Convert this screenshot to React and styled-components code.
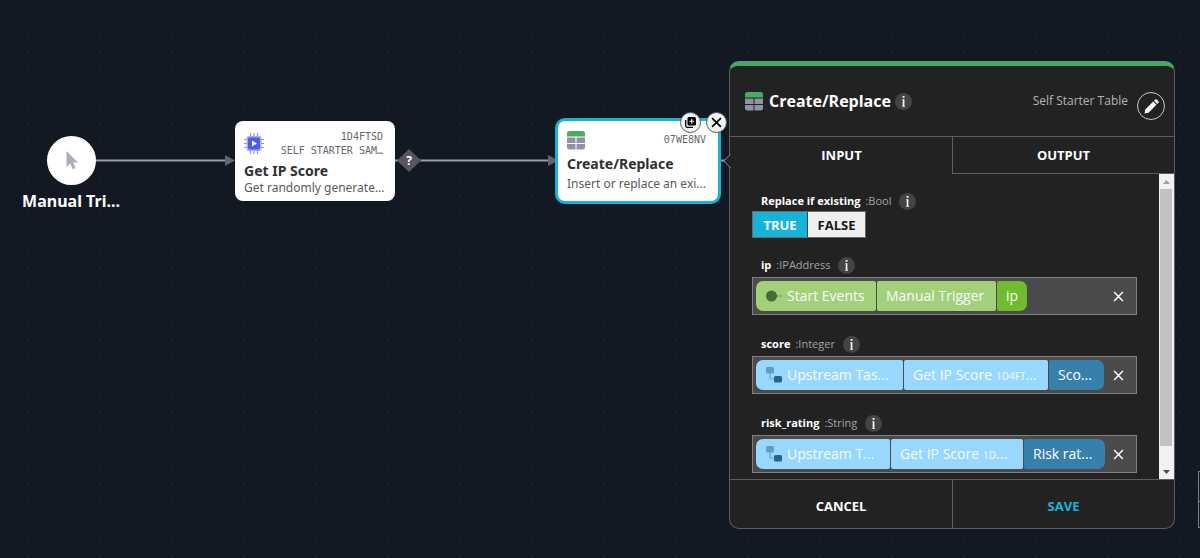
import React, { useState } from 'react';
import styled, { createGlobalStyle, css } from 'styled-components';

const GlobalStyle = createGlobalStyle`
    *, *::before, *::after {
        box-sizing: border-box;
    }

    body {
        margin: 0;
        background: #121923;
        font-family: 'Open Sans', 'Noto Sans', sans-serif;
        overflow: hidden;
    }

    button {
        border: 0;
        padding: 0;
        background: none;
        font-family: inherit;
        cursor: pointer;
    }
`;

const colors = {
    panel: '#222222',
    line: '#5c5e60',
    accent: '#16b4d8',
    green: '#48a868',
    edge: '#9a9ba8',
};

const ellipsis = css`
    overflow: hidden;
    white-space: nowrap;
    text-overflow: ellipsis;
`;

// canvas
const Canvas = styled.main`
    position: relative;
    width: 100%;
    height: 100vh;
    overflow: hidden;
    background-color: #121923;
    background-image: radial-gradient(circle, #1a232e 1px, transparent 1px);
    background-size: 18px 18px;
    background-position: 1px 7px;
`;

const Edges = styled.svg`
    position: absolute;
    top: 0;
    left: 0;
    width: 730px;
    height: 300px;
`;

const Trigger = styled.div`
    position: absolute;
    top: 136px;
    left: 21px;
    width: 100px;
    display: flex;
    flex-direction: column;
    align-items: center;
    gap: 5px;
`;

const TriggerCircle = styled.div`
    width: 49px;
    height: 49px;
    border-radius: 50%;
    background: white;
    display: flex;
    align-items: center;
    justify-content: center;
`;

const TriggerName = styled.div`
    color: white;
    font-size: 16px;
    line-height: 22px;
    font-weight: 700;
    font-family: 'Noto Sans', sans-serif;
    white-space: nowrap;
`;

const NodeCard = styled.article`
    position: absolute;
    top: ${p => p.$top}px;
    left: ${p => p.$left}px;
    width: ${p => (p.$selected ? 166 : 160)}px;
    height: ${p => (p.$selected ? 86 : 80)}px;
    padding: 8px 9px;
    border: ${p => (p.$selected ? `3px solid ${colors.accent}` : '0')};
    border-radius: ${p => (p.$selected ? 10 : 8)}px;
    background: white;
    font-family: 'Noto Sans', sans-serif;
`;

const NodeHead = styled.div`
    display: flex;
    justify-content: space-between;
    height: ${p => (p.$short ? 25 : 32)}px;
    padding-right: 3px;

    svg {
        margin-top: ${p => (p.$short ? 2 : 4)}px;
    }
`;

const NodeMeta = styled.div`
    padding-top: ${p => (p.$low ? 4 : 1)}px;
    color: #66666c;
    font-family: 'DejaVu Sans Mono', monospace;
    font-size: 10px;
    line-height: 14px;
    text-align: right;
    text-transform: uppercase;
`;

const NodeName = styled.h2`
    margin: 0;
    color: #303034;
    font-size: 14px;
    line-height: 20px;
    font-weight: 700;
`;

const NodeText = styled.p`
    margin: 0;
    color: #5a5a5e;
    font-size: 12px;
    line-height: ${p => (p.$loose ? 20 : 14)}px;
    white-space: nowrap;
`;

const NodeActions = styled.div`
    position: absolute;
    top: -9px;
    right: -9px;
    display: flex;
    gap: 5px;
`;

const RoundButton = styled.button`
    width: 21px;
    height: 21px;
    border: 1px solid #55585c;
    border-radius: 50%;
    background: #f2f2f2;
    display: flex;
    align-items: center;
    justify-content: center;
`;

const SideTool = styled.div`
    position: absolute;
    top: 471px;
    right: -28px;
    width: 30px;
    height: 57px;
    border: 1px solid #7c8086;

    &::before {
        content: '';
        display: block;
        height: 30px;
        border-bottom: 1px solid #7c8086;
    }
`;

// panel
const Panel = styled.section`
    position: absolute;
    top: 61px;
    left: 729px;
    width: 446px;
    height: 468px;
    display: flex;
    flex-direction: column;
    border: 1px solid ${colors.line};
    border-top: 5px solid ${colors.green};
    border-radius: 10px;
    background: ${colors.panel};
    color: white;
`;

const PanelHead = styled.header`
    display: flex;
    align-items: center;
    height: 71px;
    padding: 0 9px 0 15px;
    border-bottom: 1px solid ${colors.line};
`;

const PanelTitle = styled.h1`
    margin: 0 4px 0 6px;
    font-size: 16px;
    line-height: 22px;
    font-weight: 700;
`;

const Source = styled.span`
    margin-left: auto;
    margin-right: 9px;
    color: #b4b4b4;
    font-size: 12px;
    line-height: 16px;
`;

const EditButton = styled.button`
    width: 28px;
    height: 28px;
    margin-top: 10px;
    border: 1px solid #c8c8c8;
    border-radius: 50%;
    display: flex;
    align-items: center;
    justify-content: center;
`;

const Info = styled.button`
    width: 17px;
    height: 17px;
    border-radius: 50%;
    background: #444444;
    display: flex;
    align-items: center;
    justify-content: center;
`;

const Tabs = styled.div`
    display: grid;
    grid-template-columns: 1fr 1fr;
    height: 37px;
`;

const Tab = styled.button`
    color: white;
    font-size: 13px;
    font-weight: 700;
    border: 0 solid ${p => (p.$active ? 'transparent' : colors.line)};
    border-width: 0 0 1px 1px;
`;

const Body = styled.div`
    flex: 1;
    min-height: 0;
    display: flex;
`;

const Fields = styled.div`
    flex: 1;
    min-width: 0;
    padding: 17px 22px 0;
    overflow: hidden;
`;

const Field = styled.div`
    height: ${p => (p.$short ? 64 : 79)}px;
`;

const FieldLabel = styled.div`
    display: flex;
    align-items: center;
    height: 20px;
    padding-left: 9px;
    font-size: 11px;
    line-height: 18px;
    font-weight: 700;
`;

const FieldType = styled.span`
    margin: 0 8px 0 5px;
    color: #a4a4a4;
    font-weight: 400;
`;

const Toggle = styled.div`
    display: flex;
    width: 114px;
    height: 27px;
    border: 1px solid #66686a;
`;

const ToggleButton = styled.button`
    width: ${p => (p.$wide ? 58 : 54)}px;
    background: ${p => (p.$on ? colors.accent : '#efefef')};
    color: ${p => (p.$on ? 'white' : '#161616')};
    font-size: 13px;
    font-weight: 700;

    & + & {
        border-left: 1px solid #444444;
    }
`;

const ValueBox = styled.div`
    display: flex;
    align-items: center;
    height: 38px;
    margin-top: 2px;
    padding: 0 3px;
    border: 1px solid #808080;
    background: #4b4b4b;
`;

const Chips = styled.div`
    display: flex;
    gap: 1px;
    min-width: 0;
`;

const chipTone = {
    green: '#a3d07b',
    greenEnd: '#70bb2e',
    blue: '#98d8ff',
    blueEnd: '#3880ac',
};

const Chip = styled.span`
    display: flex;
    align-items: center;
    width: ${p => p.$width}px;
    height: 30px;
    padding-left: 9px;
    border-radius: 2px;
    background: ${p => chipTone[p.$tone]};
    color: ${p => (p.$tone.endsWith('End') ? 'white' : '#f6fcf8')};
    font-size: 14px;
    line-height: 20px;
    font-weight: 500;
    white-space: nowrap;

    &:first-child {
        border-radius: 7px 2px 2px 7px;
    }

    &:last-child {
        border-radius: 2px 7px 7px 2px;
    }

    svg {
        flex: none;
        margin-right: 4px;
    }

    small {
        margin-left: 4px;
        font-family: 'Noto Sans', sans-serif;
        font-size: 10px;
        opacity: 0.8;
    }
`;

const ChipText = styled.span`
    ${ellipsis}
`;

const ClearButton = styled.button`
    flex: none;
    width: 17px;
    height: 17px;
    margin-left: auto;
    margin-right: 6px;
    display: flex;
    align-items: center;
    justify-content: center;
`;

const Scrollbar = styled.div`
    width: 15px;
    display: flex;
    flex-direction: column;
    background: #f1f1f1;
`;

const ScrollArrow = styled.span`
    height: 15px;
    display: flex;
    align-items: center;
    justify-content: center;
`;

const ScrollThumb = styled.div`
    height: 257px;
    margin: 0 2px auto 1px;
    background: #c1c1c1;
`;

const PanelFoot = styled.footer`
    display: grid;
    grid-template-columns: 1fr 1fr;
    height: 49px;
    border-top: 1px solid ${colors.line};
`;

const FootButton = styled.button`
    color: ${p => (p.$primary ? colors.accent : 'white')};
    font-size: 13px;
    line-height: 18px;
    font-weight: 700;
    padding-top: 4px;

    & + & {
        border-left: 1px solid ${colors.line};
    }
`;

const Notch = styled.svg`
    position: absolute;
    top: 87px;
    left: -8px;
`;

const TableIcon = () => (
    <svg width="18" height="19" viewBox="0 0 18 19" aria-hidden="true">
        <path d="M0 5.500V2.500A2.500 2.500 0 0 1 2.500 0h13A2.500 2.500 0 0 1 18 2.500v3z" fill="#45ad63" />
        <path d="M0 6.500h8.500v5.500H0zM9.500 6.500H18V12H9.500zM0 13h8.500v5.500h-6A2.500 2.500 0 0 1 0 16zM9.500 13H18v3a2.500 2.500 0 0 1-2.500 2.500h-6z" fill="#8d94a3" />
    </svg>
);

const ChipIcon = () => (
    <svg width="20" height="21" viewBox="0 0 20 21" aria-hidden="true">
        <path d="M6.500 0v21M10 0v21M13.500 0v21M0 6.500h20M0 10.500h20M0 14.500h20" stroke="#8f97dc" strokeWidth="1.200" />
        <rect x="2.500" y="3" width="15" height="15" rx="2.500" fill="#a5acf0" />
        <rect x="4" y="4.500" width="12" height="12" rx="1.500" fill="#4f5ce8" />
        <path d="M8 7.500v6l5-3z" fill="white" />
    </svg>
);

const PointerIcon = () => (
    <svg width="14" height="19" viewBox="0 0 14 19" aria-hidden="true">
        <path d="M2.500 0v16l3.700-3.500 2.500 5.700 3-1.300-2.500-5.400H14z" fill="#a9afbb" />
    </svg>
);

const InfoIcon = () => (
    <svg width="5" height="11" viewBox="0 0 5 11" aria-hidden="true">
        <path d="M1.600 0h1.900v1.800H1.600zM1.200 3.300h2.200V10h.6v.8H1.200V10h.5V4h-.5z" fill="white" />
    </svg>
);

const CrossIcon = ({ size, color, weight }) => (
    <svg width={size} height={size} viewBox="0 0 10 10" aria-hidden="true">
        <path d="M1 1l8 8M9 1L1 9" stroke={color} strokeWidth={weight} />
    </svg>
);

const CopyIcon = () => (
    <svg width="11" height="11" viewBox="0 0 11 11" aria-hidden="true">
        <path d="M.7 3v5.800a1.500 1.500 0 0 0 1.500 1.500H8" fill="none" stroke="black" strokeWidth="1.300" />
        <rect x="2.500" y="0" width="8.500" height="8.500" rx="1.500" fill="black" />
        <path d="M6.750 2v4.500M4.500 4.250H9" stroke="white" strokeWidth="1.200" />
    </svg>
);

const PencilIcon = () => (
    <svg width="15" height="15" viewBox="0 0 15 15" aria-hidden="true">
        <path d="M.5 14.500l.8-4L9.200 2.600l3.200 3.200-7.900 7.900zM10 1.800l1-1a1.500 1.500 0 0 1 2.100 0l1.100 1.100a1.500 1.500 0 0 1 0 2.100l-1 1z" fill="white" />
    </svg>
);

const EventIcon = () => (
    <svg width="18" height="12" viewBox="0 0 18 12" aria-hidden="true">
        <path d="M10 6h7" stroke="#82ad65" strokeWidth="1.500" />
        <circle cx="6.500" cy="6" r="5.500" fill="#466c3b" />
    </svg>
);

const UpstreamIcon = () => (
    <svg width="18" height="16" viewBox="0 0 18 16" aria-hidden="true">
        <path d="M5 6v6h5" fill="none" stroke="#6ea6cc" strokeWidth="1.200" />
        <rect x="1" y="0" width="8" height="6.500" rx="1.500" fill="#629cc4" />
        <rect x="9" y="9" width="8" height="6.500" rx="1.500" fill="#2d618c" />
    </svg>
);

const InfoButton = ({ about }) => (
    <Info type="button" aria-label={`About ${about}`}>
        <InfoIcon />
    </Info>
);

const fields = [
    {
        name: 'ip',
        type: 'IPAddress',
        chips: [
            { text: 'Start Events', tone: 'green', width: 120, icon: <EventIcon /> },
            { text: 'Manual Trigger', tone: 'green', width: 119 },
            { text: 'ip', tone: 'greenEnd', width: 30 },
        ],
    },
    {
        name: 'score',
        type: 'Integer',
        chips: [
            { text: 'Upstream Tas...', tone: 'blue', width: 147, icon: <UpstreamIcon /> },
            { text: 'Get IP Score', code: '1D4FT', tone: 'blue', width: 144 },
            { text: 'Sco...', tone: 'blueEnd', width: 55 },
        ],
    },
    {
        name: 'risk_rating',
        type: 'String',
        chips: [
            { text: 'Upstream T...', tone: 'blue', width: 134, icon: <UpstreamIcon /> },
            { text: 'Get IP Score', code: '1D', tone: 'blue', width: 132 },
            { text: 'Risk rat...', tone: 'blueEnd', width: 81 },
        ],
    },
];

const App = () => {
    const [replace, setReplace] = useState(true);

    return (
        <>
            <GlobalStyle />
            <Canvas>
                <Edges aria-hidden="true">
                    <path d="M96 160.500H228M395 160.500H549M720 160.500h8" stroke={colors.edge} strokeWidth="2" />
                    <path d="M225 155l10 5.500-10 5.500zM548 155l10 5.500-10 5.500z" fill="#62656f" />
                    <path d="M409 149l12 11.500-12 11.500-12-11.500z" fill="#55565e" />
                    <text x="409" y="165" textAnchor="middle" fill="white" fontSize="12" fontWeight="700">?</text>
                </Edges>

                <Trigger>
                    <TriggerCircle><PointerIcon /></TriggerCircle>
                    <TriggerName>Manual Tri...</TriggerName>
                </Trigger>

                <NodeCard $top={121} $left={235}>
                    <NodeHead>
                        <ChipIcon />
                        <NodeMeta>1D4FTSD<br />Self Starter Sam…</NodeMeta>
                    </NodeHead>
                    <NodeName>Get IP Score</NodeName>
                    <NodeText>Get randomly generate...</NodeText>
                </NodeCard>

                <NodeCard $top={118} $left={555} $selected>
                    <NodeHead $short>
                        <TableIcon />
                        <NodeMeta $low>07WE8NV</NodeMeta>
                    </NodeHead>
                    <NodeName>Create/Replace</NodeName>
                    <NodeText $loose>Insert or replace an exi...</NodeText>
                    <NodeActions>
                        <RoundButton type="button" aria-label="Duplicate"><CopyIcon /></RoundButton>
                        <RoundButton type="button" aria-label="Remove">
                            <CrossIcon size={11} color="black" weight={1.5} />
                        </RoundButton>
                    </NodeActions>
                </NodeCard>

                <SideTool />

                <Panel>
                    <Notch width="9" height="16" viewBox="0 0 9 16" aria-hidden="true">
                        <path d="M9 1L2 8l7 7z" fill={colors.panel} />
                        <path d="M8.500 1L2 8l6.500 7M0 8h2" fill="none" stroke="#85878b" />
                    </Notch>
                    <PanelHead>
                        <TableIcon />
                        <PanelTitle>Create/Replace</PanelTitle>
                        <InfoButton about="Create/Replace" />
                        <Source>Self Starter Table</Source>
                        <EditButton type="button" aria-label="Edit"><PencilIcon /></EditButton>
                    </PanelHead>
                    <Tabs role="tablist">
                        <Tab type="button" role="tab" aria-selected="true" $active>INPUT</Tab>
                        <Tab type="button" role="tab" aria-selected="false">OUTPUT</Tab>
                    </Tabs>
                    <Body>
                        <Fields>
                            <Field $short>
                                <FieldLabel>
                                    <span id="replace-label">Replace if existing</span>
                                    <FieldType>:Bool</FieldType>
                                    <InfoButton about="Replace if existing" />
                                </FieldLabel>
                                <Toggle role="group" aria-labelledby="replace-label">
                                    <ToggleButton type="button" aria-pressed={replace} $on={replace} onClick={() => setReplace(true)}>TRUE</ToggleButton>
                                    <ToggleButton type="button" aria-pressed={!replace} $on={!replace} $wide onClick={() => setReplace(false)}>FALSE</ToggleButton>
                                </Toggle>
                            </Field>
                            {fields.map(field => (
                                <Field key={field.name}>
                                    <FieldLabel>
                                        <span id={`${field.name}-label`}>{field.name}</span>
                                        <FieldType>:{field.type}</FieldType>
                                        <InfoButton about={field.name} />
                                    </FieldLabel>
                                    <ValueBox role="group" aria-labelledby={`${field.name}-label`}>
                                        <Chips>
                                            {field.chips.map(chip => (
                                                <Chip key={chip.text} $tone={chip.tone} $width={chip.width}>
                                                    {chip.icon}
                                                    <ChipText>
                                                        {chip.text}
                                                        {chip.code && <><small>{chip.code}</small>...</>}
                                                    </ChipText>
                                                </Chip>
                                            ))}
                                        </Chips>
                                        <ClearButton type="button" aria-label={`Clear ${field.name}`}>
                                            <CrossIcon size={11} color="white" weight={1.3} />
                                        </ClearButton>
                                    </ValueBox>
                                </Field>
                            ))}
                        </Fields>
                        <Scrollbar aria-hidden="true">
                            <ScrollArrow>
                                <svg width="7" height="4" viewBox="0 0 7 4"><path d="M0 4l3.500-4L7 4z" fill="#a0a0a0" /></svg>
                            </ScrollArrow>
                            <ScrollThumb />
                            <ScrollArrow>
                                <svg width="7" height="4" viewBox="0 0 7 4"><path d="M0 0l3.500 4L7 0z" fill="#505050" /></svg>
                            </ScrollArrow>
                        </Scrollbar>
                    </Body>
                    <PanelFoot>
                        <FootButton type="button">CANCEL</FootButton>
                        <FootButton type="button" $primary>SAVE</FootButton>
                    </PanelFoot>
                </Panel>
            </Canvas>
        </>
    );
};

export default App;
